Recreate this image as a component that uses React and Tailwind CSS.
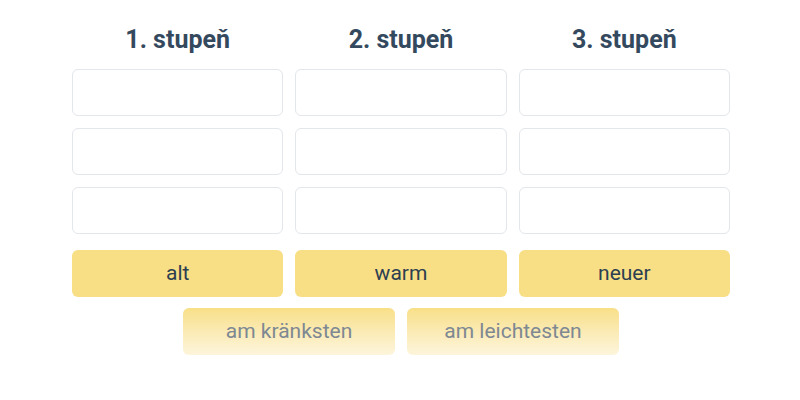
export default function App() {
  const cols = ["1. stupeň", "2. stupeň", "3. stupeň"];
  const words = ["alt", "warm", "neuer"];
  return (
    <div className="w-[800px] h-[400px] bg-white flex flex-col items-center pt-[22px] pl-[2px]" style={{ fontFamily: "Roboto, 'Liberation Sans', sans-serif" }}>
      <div className="grid grid-cols-3 gap-x-[12px] w-[658px]">
        {cols.map((c) => (
          <div key={c} className="flex flex-col gap-[12px]">
            <div className="h-[35px] flex items-center justify-center text-[25px] font-bold text-[#34495e]">{c}</div>
            {[0, 1, 2].map((i) => (
              <div key={i} className="h-[47px] rounded-[6px] border border-[#e3e6ea] bg-white" />
            ))}
          </div>
        ))}
      </div>
      <div className="grid grid-cols-3 gap-x-[12px] w-[658px] mt-[16px]">
        {words.map((w) => (
          <div key={w} className="h-[47px] rounded-[6px] bg-[#f8df86] flex items-center justify-center text-[21px] text-[#2c3e50]">{w}</div>
        ))}
      </div>
      <div className="flex gap-[12px] mt-[11px]">
        {["am kränksten", "am leichtesten"].map((w) => (
          <div key={w} className="w-[212px] h-[47px] rounded-[6px] bg-gradient-to-b from-[#f8df88] to-[#fdf5dc] flex items-center justify-center text-[21px] text-[#7e8892]">{w}</div>
        ))}
      </div>
    </div>
  );
}
